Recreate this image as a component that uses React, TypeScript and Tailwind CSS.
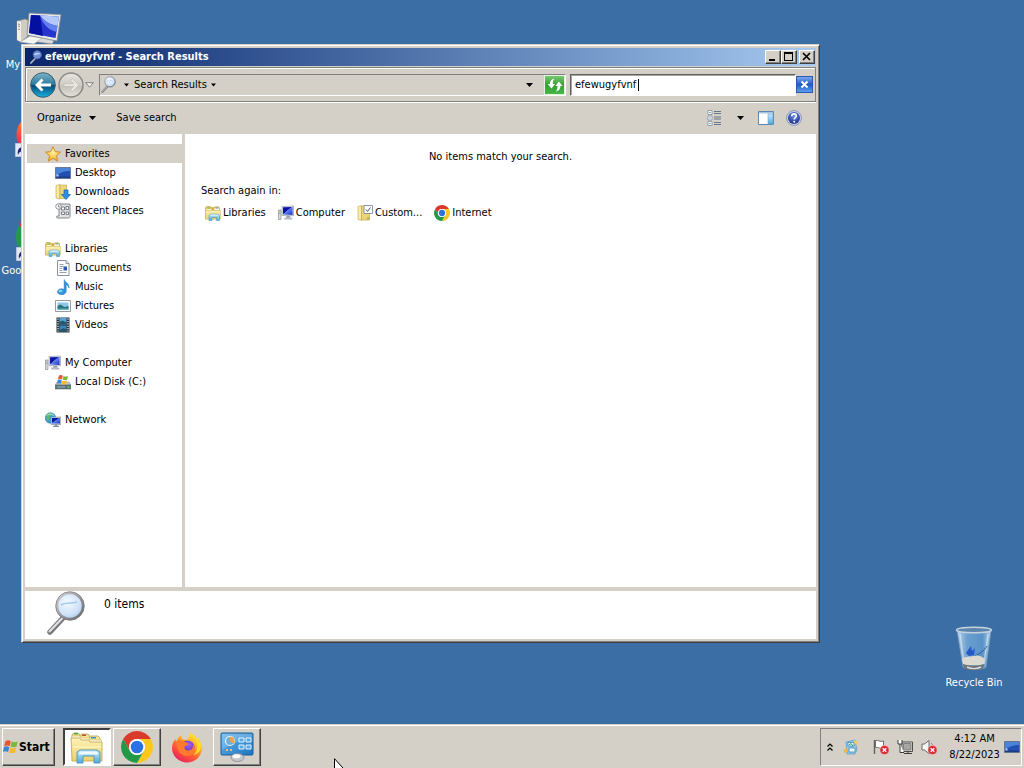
import { useState } from 'react'
import type { ReactNode, SVGProps } from 'react'
import { clsx } from 'clsx'

type IconProps = SVGProps<SVGSVGElement>

const RAISED =
  'border border-t-white border-l-white border-r-[#404040] border-b-[#404040] bg-[#d4d0c8] shadow-[inset_-1px_-1px_0_#808080]'

// Gradients shared by the icons below
function IconDefs() {
  return (
    <svg className="absolute h-0 w-0" aria-hidden="true">
      <defs>
        <linearGradient id="screen" x1="0" y1="0" x2="1" y2="1">
          <stop offset="0" stopColor="#0818b8" />
          <stop offset="0.42" stopColor="#0a10a0" />
          <stop offset="0.46" stopColor="#5f80f0" />
          <stop offset="1" stopColor="#2030c8" />
        </linearGradient>
        <linearGradient id="folder" x1="0" y1="0" x2="0" y2="1">
          <stop offset="0" stopColor="#fdf3b8" />
          <stop offset="1" stopColor="#ecd168" />
        </linearGradient>
        <linearGradient id="stand" x1="0" y1="0" x2="0" y2="1">
          <stop offset="0" stopColor="#c9ecfb" />
          <stop offset="1" stopColor="#4fa9dc" />
        </linearGradient>
        <radialGradient id="lens" cx="0.4" cy="0.35" r="0.8">
          <stop offset="0" stopColor="#f4faff" />
          <stop offset="0.6" stopColor="#cfe2f8" />
          <stop offset="1" stopColor="#9dbce4" />
        </radialGradient>
        <linearGradient id="metal" x1="0" y1="0" x2="1" y2="1">
          <stop offset="0" stopColor="#d4d4d8" />
          <stop offset="0.5" stopColor="#9a9aa0" />
          <stop offset="1" stopColor="#66666c" />
        </linearGradient>
        <linearGradient id="backBall" x1="0" y1="0" x2="0" y2="1">
          <stop offset="0" stopColor="#7fb4c8" />
          <stop offset="0.48" stopColor="#2b7a9c" />
          <stop offset="0.52" stopColor="#064a78" />
          <stop offset="1" stopColor="#19b4e4" />
        </linearGradient>
        <linearGradient id="forwardBall" x1="0" y1="0" x2="0" y2="1">
          <stop offset="0" stopColor="#e6e4df" />
          <stop offset="0.5" stopColor="#cfccc5" />
          <stop offset="0.55" stopColor="#c4c1ba" />
          <stop offset="1" stopColor="#e4e2dc" />
        </linearGradient>
        <radialGradient id="star" cx="0.5" cy="0.4" r="0.6">
          <stop offset="0" stopColor="#fff6a0" />
          <stop offset="1" stopColor="#f6a81c" />
        </radialGradient>
        <linearGradient id="fox" x1="0.85" y1="0.05" x2="0.25" y2="1">
          <stop offset="0" stopColor="#fff04a" />
          <stop offset="0.35" stopColor="#ffae1f" />
          <stop offset="0.65" stopColor="#ff5a33" />
          <stop offset="1" stopColor="#e81c64" />
        </linearGradient>
        <radialGradient id="foxGlobe" cx="0.6" cy="0.3" r="0.8">
          <stop offset="0" stopColor="#a45cf0" />
          <stop offset="1" stopColor="#452aa0" />
        </radialGradient>
        <linearGradient id="bin" x1="0" y1="0" x2="1" y2="0">
          <stop offset="0" stopColor="#b9d6ee" />
          <stop offset="0.3" stopColor="#6b9fd0" />
          <stop offset="0.75" stopColor="#5a92c8" />
          <stop offset="1" stopColor="#b4d4ec" />
        </linearGradient>
        <linearGradient id="panel" x1="0" y1="0" x2="1" y2="1">
          <stop offset="0" stopColor="#6cb8ec" />
          <stop offset="1" stopColor="#1c74c0" />
        </linearGradient>
        <radialGradient id="help" cx="0.5" cy="0.3" r="0.7">
          <stop offset="0" stopColor="#6f90e4" />
          <stop offset="1" stopColor="#1c2f92" />
        </radialGradient>
      </defs>
    </svg>
  )
}

function Icon({ children, ...rest }: IconProps) {
  return (
    <svg viewBox="0 0 16 16" width="16" height="16" aria-hidden="true" {...rest} className={clsx('shrink-0', rest.className)}>
      {children}
    </svg>
  )
}

function ComputerIcon(props: IconProps) {
  return (
    <Icon {...props}>
      <path d="M0.500 5h2.500v9.500h-2.500z" fill="#d8dadf" stroke="#8b8f98" strokeWidth="0.7" />
      <path d="M1.200 7h1.200M1.200 8.500h1.200" stroke="#5c8a4c" strokeWidth="0.6" />
      <path d="M4 1.500L15.500 1v9.800L4 10.500z" fill="#dfe3ea" stroke="#8a90a0" strokeWidth="0.6" />
      <path d="M5 2.300L14.600 2v7.900L5 9.600z" fill="url(#screen)" />
      <path d="M8.500 10.700h3.500l0.500 2h-4.500z" fill="#9aa0ac" />
      <path d="M6.500 13h7.500v1.200h-7.500z" fill="#c8ccd4" stroke="#8a90a0" strokeWidth="0.4" />
    </Icon>
  )
}

function DesktopComputerIcon(props: IconProps) {
  return (
    <Icon viewBox="0 0 46 40" width="46" height="40" {...props}>
      <path d="M1 10l8-2 3 1v16l-7 6-4-2z" fill="#cfccc4" stroke="#87857e" strokeWidth="0.7" />
      <path d="M1 10l4 1v20l-4-2z" fill="#f1efe8" />
      <path d="M2 13l2 0.500M2 15l2 0.500M2 18l2 0.500" stroke="#77756e" strokeWidth="0.8" />
      <path d="M14 24l18 2 6 4-2 3-22-3z" fill="#d9dadb" stroke="#85878c" strokeWidth="0.6" />
      <path d="M4 31l10-6 12 2-8 6z" fill="#f4f4f2" stroke="#aaa" strokeWidth="0.6" />
      <path d="M13 2L45 3.500 41 30 11 24z" fill="#e6e8ea" stroke="#83878f" strokeWidth="0.8" />
      <path d="M15 4L43 5.500 39.500 27 13 22z" fill="#2434cc" />
      <path d="M15 4l9 0.500 3 20.500L13 22z" fill="#0610a0" />
      <path d="M24 4.500L43 5.500 41.500 15C35 14 29 11 24 4.500z" fill="#b4c8fc" />
      <path d="M24 4.500C29 11 35 14 41.500 15l-1 6C33 19 27 14 24 4.500z" fill="#6480f0" />
    </Icon>
  )
}

function LibrariesIcon(props: IconProps) {
  return (
    <Icon viewBox="0 0 32 32" {...props}>
      <path d="M1 5l2-2h8l2 2h5l2-1.500h7l2 2V28H1z" fill="#e6c95e" stroke="#b3953a" strokeWidth="1" />
      <path d="M3 8h9l1 2h6V6h9v5H3z" fill="#fbf8dd" />
      <path d="M5 5h5v2H5z" fill="#6cbf50" />
      <path d="M13 7h5v2h-5z" fill="#e8804e" />
      <path d="M21 5h6v2h-6z" fill="#5aa4dc" />
      <path d="M1 11h30v17H1z" fill="url(#folder)" stroke="#c9ab4c" strokeWidth="0.8" />
      <path d="M8 21l3-3h15l3 3v10h-6v-6h-9v6H8z" fill="url(#stand)" stroke="#3c8fc4" strokeWidth="1" />
      <path d="M10 21l2-1.500h13l2 1.500z" fill="#eefaff" />
    </Icon>
  )
}

function ExplorerIcon(props: IconProps) {
  return (
    <Icon viewBox="0 0 34 34" width="34" height="34" {...props}>
      <path d="M2 5l1.500-2H8l2 2v4H2z" fill="#f2e08a" stroke="#ae9640" strokeWidth="0.7" />
      <path d="M10 6l1.500-2H18l2 2v4H10z" fill="#f4e596" stroke="#ae9640" strokeWidth="0.7" />
      <path d="M19 8l1.500-2H28l2 2v4H19z" fill="#f4e596" stroke="#ae9640" strokeWidth="0.7" />
      <path d="M4 3h4v1.500H4z" fill="#48a848" />
      <path d="M12 4.500h4V6h-4z" fill="#c04a38" />
      <path d="M21 7h5v1.500h-5z" fill="#3c8cd0" />
      <path d="M2 6h8l1 2h8l1 2h11.500v3H2z" fill="#fffbe4" stroke="#c5ad58" strokeWidth="0.5" />
      <path d="M1 8h9l1 2h8l1 2h12v19H2z" fill="url(#folder)" stroke="#bfa44a" strokeWidth="0.8" />
      <path d="M3 17h28" stroke="#fff9d0" strokeWidth="1" />
      <path d="M7 22l3-2h17l3 2v11h-6v-7H13v7H7z" fill="url(#stand)" stroke="#4a94c4" strokeWidth="0.9" />
      <path d="M9 23l2-1.500h15l2 1.500v1.500H9z" fill="#eefaff" />
    </Icon>
  )
}

function ChromeIcon(props: IconProps) {
  return (
    <Icon viewBox="0 0 24 24" {...props}>
      <path d="M1.610 6A12 12 0 0 1 22.390 6H12A6 6 0 0 0 6.800 15z" fill="#d93a2c" />
      <path d="M22.390 6A12 12 0 0 1 12 24l5.200-9A6 6 0 0 0 12 6z" fill="#fbc71c" />
      <path d="M12 24A12 12 0 0 1 1.610 6l5.190 9a6 6 0 0 0 10.400 0z" fill="#249a48" />
      <circle cx="12" cy="12" r="6" fill="#fff" />
      <circle cx="12" cy="12" r="4.700" fill="#2c70e4" />
    </Icon>
  )
}

function FirefoxIcon(props: IconProps) {
  return (
    <Icon viewBox="0 0 32 32" {...props}>
      <path
        d="M20 1c1.500 2.500 3.500 3.500 5.500 6.500 1-0.500 1-1.500 1-2 3 4 4.500 8 4.300 12.500C30.400 26 24 31.500 16 31.500S1 25 1 17.500c0-4 1.500-7.500 3.500-9.500 0 1.500 0.500 2 1 2.500C6.500 7 8.500 5 10.500 4c-0.500 2 0 3.500 1.500 4.500 2 0 3.500 0 5 0.500C17.500 6 18 3 20 1z"
        fill="url(#fox)"
      />
      <circle cx="16.500" cy="16.500" r="7" fill="url(#foxGlobe)" />
      <path d="M6 10.500c3-2 6-1.500 8.500 1 1.500 0 2.500 0.500 3 1.500-1 1.500-3 1.500-4 2.500-0.500 2 1 4.500 4.500 4 3-0.500 4.500-3 4-6 2 2 2.500 5.500 0.500 8.500-3 4-10 4-13.500 0C6.500 19 5 14 6 10.500z" fill="#ff7a2c" />
      <path d="M20 1c0 4 5 6 6 12 1 5-1 9-4 11 6-1 8.500-6 8-10-1-3-3-4-4.500-6.500C23.500 4.500 21.500 3.500 20 1z" fill="#ffd83c" />
    </Icon>
  )
}

function ControlPanelIcon(props: IconProps) {
  return (
    <Icon viewBox="0 0 34 30" width="34" height="30" {...props}>
      <rect x="1" y="1" width="32" height="22" rx="1" fill="url(#panel)" stroke="#1d5f9c" />
      <path d="M2 2h30v4C20 8 10 12 2 18z" fill="#fff" opacity="0.18" />
      <circle cx="10" cy="9" r="4.500" fill="#66b0e8" stroke="#e6f4ff" strokeWidth="1.200" />
      <path d="M10 9V4.500A4.500 4.500 0 0 1 13.500 12z" fill="#f0a43c" />
      <path d="M19 6h5v4h-5zM26 6h5v4h-5zM19 13h5v4h-5zM26 13h5v4h-5z" fill="#58a8e4" stroke="#e6f4ff" strokeWidth="1" />
      <path d="M6 18h2M10 18h2" stroke="#f0c060" strokeWidth="2" />
      <ellipse cx="17.500" cy="25.500" rx="6.500" ry="4" fill="#c4c6ca" stroke="#888c94" strokeWidth="0.8" />
      <ellipse cx="16.500" cy="24.300" rx="4" ry="2" fill="#fafafa" />
    </Icon>
  )
}

function SearchGlass({ dark, ...props }: IconProps & { dark?: boolean }) {
  return (
    <Icon viewBox="0 0 40 44" {...props}>
      <path d="M17 27L4 41" stroke={dark ? '#8a90b0' : '#77777d'} strokeWidth="5.500" strokeLinecap="round" />
      <path d="M17 26.500L3.500 40.500" stroke="#e4e4e6" strokeWidth="2" strokeLinecap="round" />
      <circle cx="24" cy="15" r="13" fill={dark ? '#7090d8' : 'url(#lens)'} stroke={dark ? '#5468a8' : 'url(#metal)'} strokeWidth="2.500" />
      {!dark && <circle cx="24" cy="15" r="14.300" fill="none" stroke="#707078" strokeWidth="0.7" />}
      <path d="M15 14c5-3 10-1 16-3" stroke={dark ? '#d8e4fc' : '#a4caf0'} strokeWidth={dark ? 4 : 1.5} fill="none" />
    </Icon>
  )
}

function StarIcon() {
  return (
    <Icon>
      <path d="M8 0.700l2.200 4.900 5.300 0.500-4 3.600 1.200 5.400L8 12.300l-4.700 2.800 1.200-5.400-4-3.600 5.300-0.500z" fill="url(#star)" stroke="#c8801c" strokeWidth="0.8" strokeLinejoin="round" />
    </Icon>
  )
}

function DesktopIcon(props: IconProps) {
  return (
    <Icon {...props}>
      <path d="M0.500 2.500h15v11h-15z" fill="#2450b4" stroke="#5f6c88" strokeWidth="0.8" />
      <path d="M1 3h14v3C9 6 4 8 1 11z" fill="#4c84d8" />
      <path d="M1 11.500h14V13H1z" fill="#1c3c84" />
      <path d="M1.500 9.500h2v2h-2z" fill="#bcd4f4" />
    </Icon>
  )
}

function DownloadsIcon() {
  return (
    <Icon>
      <path d="M1 1.500l4-1v14.500l-4-1z" fill="#f6e9a0" stroke="#bfa24a" strokeWidth="0.6" />
      <path d="M5 1h6.500v13.500H5z" fill="#eed678" stroke="#bfa24a" strokeWidth="0.6" />
      <path d="M9 6h4v4.500h2.500L11 15.500 6.500 10.500H9z" fill="#2f8fe0" stroke="#1560a8" strokeWidth="0.7" />
    </Icon>
  )
}

function RecentIcon() {
  return (
    <Icon>
      <path d="M4 1h11v12.500c0 1-1 1.500-2 1.500H2.500c-1 0-1.500-2 0-2H4z" fill="#dfe2e5" stroke="#777b80" strokeWidth="0.9" />
      <path d="M6.500 4h3v3h-3zM11 3.500h2.500v3H11zM6.500 9h3v2.500h-3zM11 9h2.500v2.500H11z" fill="#fff" stroke="#70747a" strokeWidth="0.9" />
      <circle cx="3.500" cy="3.500" r="2.800" fill="#f8f8f8" stroke="#777b80" strokeWidth="0.8" />
      <path d="M3.500 1.800v2h1.500" stroke="#666" strokeWidth="0.7" fill="none" />
    </Icon>
  )
}

function DocumentIcon() {
  return (
    <Icon>
      <path d="M2.500 0.500h8.500l3 3v12h-11.500z" fill="#fdfdfd" stroke="#80868e" strokeWidth="0.9" />
      <path d="M11 0.500v3h3" fill="#dde2e8" stroke="#80868e" strokeWidth="0.8" />
      <path d="M4.500 4.500h4M4.500 6.500h4M4.500 8.500h2.500M4.500 10.500h2.500M4.500 12.500h7" stroke="#8a96a8" strokeWidth="0.9" />
      <path d="M8.500 6.500h3.500v4h-3.500z" fill="#2c58b4" />
    </Icon>
  )
}

function MusicIcon() {
  return (
    <Icon>
      <path d="M9.200 0.500c0.500 3 5.300 3.500 4.800 8.500-0.500-2-1.500-3-2.800-3.200v6.200c0 5-9.200 4.500-8.700 0.500 0.500-2.500 4-3.500 6.700-2z" fill="#2f96dc" stroke="#1b6cb0" strokeWidth="0.5" />
      <ellipse cx="5.500" cy="12" rx="2" ry="1.200" fill="#90d0f8" />
    </Icon>
  )
}

function PicturesIcon() {
  return (
    <Icon>
      <path d="M0.500 2.500h15v11h-15z" fill="#fdfdfd" stroke="#8a9098" strokeWidth="0.9" />
      <path d="M2.500 4.500h11v7h-11z" fill="#8cc8ec" />
      <path d="M2.500 8l3-1.500 4 2.500 4-1v3.500h-11z" fill="#2e7474" />
      <path d="M2.500 10.500h11v1h-11z" fill="#5fb4d4" />
    </Icon>
  )
}

function VideosIcon() {
  return (
    <Icon>
      <path d="M1.500 0.500h13v15h-13z" fill="#28343c" />
      <path d="M4.500 1h7v6.500h-7z" fill="#5aa4d8" />
      <path d="M4.500 8.500h7V15h-7z" fill="#3c84bc" />
      <path d="M4.500 5l3-1.500 4 2v2h-7zM4.500 13l4-2 3 1.500V15h-7z" fill="#2a5468" />
      <path d="M3 1.500v13M13 1.500v13" stroke="#e8eef0" strokeWidth="1.200" strokeDasharray="1.200 1.200" />
    </Icon>
  )
}

function FlagLogo(props: IconProps) {
  return (
    <Icon {...props}>
      <path d="M2.500 2.200C4.500 1 6 1.200 7.800 2.200L6.500 7.200C5 6.200 3 6.200 1.200 7.200z" fill="#e8562c" />
      <path d="M8.600 2.600c2 1 4 1 6.200 0l-1.300 5c-2 1-4 0.800-6 0z" fill="#7cb83c" />
      <path d="M1 8c2-1 3.800-0.800 5.300 0.200L5 13c-1.600-1-3.500-0.900-5 0z" fill="#3c84d8" />
      <path d="M7.200 8.500c2 1 4 1 6 0L12 13.400c-2 1-4 0.800-6 0z" fill="#f4bc2c" />
    </Icon>
  )
}

function DiskIcon() {
  return (
    <Icon>
      <path d="M2 8h12l1.800 3H0.200z" fill="#c4cad0" stroke="#788088" strokeWidth="0.5" />
      <path d="M0.200 11h15.600v4H0.200z" fill="#5c7478" stroke="#48585c" strokeWidth="0.5" />
      <path d="M2 13h8" stroke="#9cb4b8" strokeWidth="1" />
      <path d="M12.500 12.500h1.800v1.200h-1.800z" fill="#5cf060" />
      <FlagLogo x="2" y="0" width="12" height="12" />
    </Icon>
  )
}

function NetworkIcon() {
  return (
    <Icon>
      <circle cx="5.500" cy="6" r="5.300" fill="#3c9cd8" stroke="#226c9c" strokeWidth="0.5" />
      <path d="M2 3c2-2 5-2.500 6-1.500L6 4 4.500 4.500 5 7 2.500 8.500 1 6z" fill="#5cbc6c" />
      <path d="M1.500 3.500C4 1.500 8 2 10 4.500" stroke="#d8f0fc" strokeWidth="0.7" fill="none" />
      <path d="M6 5h10v7.500H6z" fill="#c8d0dc" stroke="#687080" strokeWidth="0.5" />
      <path d="M7 6h8v5.500H7z" fill="url(#screen)" />
      <path d="M9.500 12.500h3v1.500h1.500v1H8v-1h1.500z" fill="#8890a0" />
    </Icon>
  )
}

function SearchCustomIcon() {
  return (
    <Icon>
      <path d="M1 1.500l3.500-1v15l-3.500-1z" fill="#f8eda8" stroke="#bfa24a" strokeWidth="0.6" />
      <path d="M4.500 1h8v14h-8z" fill="#eed678" stroke="#bfa24a" strokeWidth="0.6" />
      <path d="M7 0.500h8.500v8H7z" fill="#fff" stroke="#6c7c94" strokeWidth="0.8" />
      <path d="M9 4.500l1.500 2 3-4" stroke="#3c5c8c" strokeWidth="1" fill="none" />
      <path d="M10 12h3v3h-3z" fill="#c4b468" />
    </Icon>
  )
}

function Arrow({ className }: { className?: string }) {
  return (
    <svg viewBox="0 0 7 4" width="7" height="4" className={clsx('shrink-0', className)} aria-hidden="true">
      <path d="M0 0h7L3.500 4z" fill="currentColor" />
    </svg>
  )
}

function RecycleBinIcon() {
  return (
    <svg viewBox="0 0 38 46" width="38" height="46" aria-hidden="true">
      <path d="M2 4h34l-5 37c-1 3-21 3-23 0z" fill="url(#bin)" stroke="#7c98b4" strokeWidth="0.8" />
      <path d="M5 8l4 30M33 8l-4 30" stroke="#dcecf8" strokeWidth="1.500" opacity="0.6" />
      <path d="M13 24l3-4 1 5 3-3-1 7-5 1-3-3z" fill="#2458c8" />
      <path d="M32 20c-3 5-8 9-16 11" stroke="#2c5c94" strokeWidth="1" fill="none" />
      <path d="M7 33c3-3 8-2 11-3s8-1 12 3l-1 5c-6 2-15 2-21 0z" fill="#dcdad0" />
      <path d="M8 38c6 2 16 2 21 0l-1 4c-4 3-15 3-19 0z" fill="#6e7478" />
      <path d="M12 41c4 2 10 2 14 0" stroke="#d8dcdf" strokeWidth="1.500" fill="none" />
      <ellipse cx="19" cy="4" rx="17.500" ry="2.800" fill="#5c84ac" stroke="#c4d2de" strokeWidth="1.500" />
    </svg>
  )
}

function ShortcutBadge() {
  return (
    <svg viewBox="0 0 14 14" width="14" height="14" className="absolute bottom-0 left-0" aria-hidden="true">
      <path d="M0.500 0.500h13v13h-13z" fill="#e4eaf4" stroke="#b4c4dc" />
      <path d="M3 12C2 7 4 4 8 4V2L12 6.500 8 10V8C6 8 4 9 3 12z" fill="#1c2c6c" />
    </svg>
  )
}

function DesktopItem({ label, children, className }: { label: string; children: ReactNode; className: string }) {
  return (
    <button className={clsx('absolute flex w-20 flex-col items-center gap-0.5 text-white', className)}>
      <span className="relative flex h-12 items-center">{children}</span>
      <span className="whitespace-nowrap">{label}</span>
    </button>
  )
}

const NAV = [
  {
    label: 'Favorites',
    icon: <StarIcon />,
    selected: true,
    items: [
      { label: 'Desktop', icon: <DesktopIcon /> },
      { label: 'Downloads', icon: <DownloadsIcon /> },
      { label: 'Recent Places', icon: <RecentIcon /> },
    ],
  },
  {
    label: 'Libraries',
    icon: <LibrariesIcon />,
    items: [
      { label: 'Documents', icon: <DocumentIcon /> },
      { label: 'Music', icon: <MusicIcon /> },
      { label: 'Pictures', icon: <PicturesIcon /> },
      { label: 'Videos', icon: <VideosIcon /> },
    ],
  },
  {
    label: 'My Computer',
    icon: <ComputerIcon />,
    items: [{ label: 'Local Disk (C:)', icon: <DiskIcon /> }],
  },
  { label: 'Network', icon: <NetworkIcon />, items: [] },
]

const SEARCH_AGAIN = [
  { label: 'Libraries', icon: <LibrariesIcon /> },
  { label: 'Computer', icon: <ComputerIcon /> },
  { label: 'Custom...', icon: <SearchCustomIcon /> },
  { label: 'Internet', icon: <ChromeIcon /> },
]

function TitleBar({ query }: { query: string }) {
  return (
    <div className="flex h-[18px] items-center bg-linear-to-r from-[#0a246a] to-[#a6caf0] pl-1 text-white">
      <SearchGlass dark width="14" height="14" />
      <h1 className="ml-0.5 flex-1 truncate text-[11px] font-bold">{query} - Search Results</h1>
      <button aria-label="Minimize" className={clsx('h-3.5 w-4', RAISED)}>
        <svg viewBox="0 0 14 12" className="h-full w-full" aria-hidden="true">
          <path d="M3 8h6v2H3z" />
        </svg>
      </button>
      <button aria-label="Maximize" className={clsx('h-3.5 w-4', RAISED)}>
        <svg viewBox="0 0 14 12" className="h-full w-full" aria-hidden="true">
          <path d="M2 1h9v9H2zM3 3v6h7V3z" fillRule="evenodd" />
        </svg>
      </button>
      <button aria-label="Close" className={clsx('mr-px ml-0.5 h-3.5 w-4', RAISED)}>
        <svg viewBox="0 0 14 12" className="h-full w-full" aria-hidden="true">
          <path d="M3 2l7 7M10 2L3 9" stroke="#000" strokeWidth="1.700" />
        </svg>
      </button>
    </div>
  )
}

function AddressBar({ query, onChange }: { query: string; onChange: (value: string) => void }) {
  return (
    <div className="mt-px flex h-[35px] items-center border border-[#808080] pr-0.5 pl-1 shadow-[inset_1px_1px_0_#fff,0_1px_0_#fff]">
      <button aria-label="Back">
        <svg viewBox="0 0 26 26" width="26" height="26" aria-hidden="true">
          <circle cx="13" cy="13" r="12.300" fill="url(#backBall)" stroke="#3c5c6c" />
          <path d="M5 13l6.500-6.500 2 2L10.500 11.500H21v3H10.500l3 3-2 2z" fill="#fff" />
        </svg>
      </button>
      <button aria-label="Forward" className="ml-0.5">
        <svg viewBox="0 0 26 26" width="26" height="26" aria-hidden="true">
          <circle cx="13" cy="13" r="12" fill="url(#forwardBall)" stroke="#8c8a84" strokeWidth="1.500" />
          <path d="M21 13l-6.500-6.500-2 2 3 3H6v3h9.500l-3 3 2 2z" fill="#e6e4de" stroke="#bab7b0" strokeWidth="0.600" />
        </svg>
      </button>
      <button aria-label="Recent pages" className="mx-px">
        <svg viewBox="0 0 9 6" width="9" height="6" aria-hidden="true">
          <path d="M0.700 0.700h7.600L4.500 5.200z" fill="#f4f2ee" stroke="#6c6a66" strokeWidth="0.800" />
        </svg>
      </button>
      <div className="ml-1 flex h-[22px] flex-1 items-center border border-t-[#808080] border-r-white border-b-white border-l-[#808080]">
        <SearchGlass width="17" height="17" />
        <button aria-label="Locations" className="pr-[5px] pl-[7px]">
          <Arrow className="w-[5px]" />
        </button>
        <button className="flex items-center gap-1">
          Search Results
          <Arrow className="w-[5px]" />
        </button>
        <button aria-label="Previous locations" className="mr-[11px] ml-auto">
          <Arrow />
        </button>
        <button aria-label="Refresh" className="flex h-5 w-[21px] items-center justify-center border border-[#e4f4e0] bg-linear-to-b from-[#78c870] via-[#30a030] to-[#48b848]">
          <svg viewBox="0 0 18 16" width="18" height="16" aria-hidden="true">
            <path d="M8.500 1.500C5.500 2 4 4 3.800 7H1.500L5.500 11.500 9 7H6.800C6.800 5 7.200 3 8.500 1.500z" fill="#fff" />
            <path d="M10 14.500c3-0.500 4.300-2.500 4.500-5.500h2.200L12.800 4.500 9.300 9h2.200c0 2-0.300 4-1.500 5.500z" fill="#fff" />
          </svg>
        </button>
      </div>
      <div className="relative ml-1 flex h-[22px] w-[226px] border border-t-[#606060] border-r-white border-b-white border-l-[#606060] bg-white shadow-[inset_1px_1px_0_#a8a6a0]">
        <input
          aria-label="Search"
          value={query}
          onChange={(e) => onChange(e.target.value)}
          className="w-full bg-transparent pl-1 outline-none"
        />
        <span className="absolute top-1 left-[67px] h-3 w-px bg-black" />
      </div>
      <button aria-label="Clear search" className="flex h-[17px] w-[17px] items-center justify-center border border-[#2c58b0] bg-linear-to-b from-[#7ca8ec] via-[#2458c4] to-[#5ca0f0]">
        <svg viewBox="0 0 9 9" width="9" height="9" aria-hidden="true">
          <path d="M1.500 1.500l6 6M7.500 1.500l-6 6" stroke="#fff" strokeWidth="2" />
        </svg>
      </button>
    </div>
  )
}

function Toolbar() {
  return (
    <div className="flex h-8 items-center pr-3.5 pl-3">
      <button className="flex items-center gap-2">
        Organize
        <Arrow />
      </button>
      <button className="ml-5">Save search</button>
      <div className="ml-auto flex items-center">
        <button aria-label="Change view">
          <Icon>
            <path d="M1 0.500h4v4H1zM1 6h4v4H1zM1 11.500h4v4H1z" fill="#fff" stroke="#7890a4" strokeWidth="0.800" />
            <path d="M2.500 2h1v1h-1zM2.500 7.500h1v1h-1zM2.500 13h1v1h-1z" fill="#2c4c70" />
            <path d="M7 1.500h7M7 3.500h7M7 7h7M7 9h7M7 12.500h7M7 14.500h7" stroke="#587088" strokeWidth="0.900" />
          </Icon>
        </button>
        <button aria-label="More options" className="px-3.5">
          <Arrow />
        </button>
        <button aria-label="Show the preview pane">
          <Icon>
            <path d="M0.500 1.500h15v13h-15z" fill="#fff" stroke="#5c88b0" />
            <path d="M1 2h14v1.500H1z" fill="#a8c4dc" />
            <path d="M10 4h5v10h-5z" fill="url(#stand)" stroke="#6ca0c8" strokeWidth="0.600" />
          </Icon>
        </button>
        <button aria-label="Get help" className="ml-3">
          <Icon>
            <circle cx="8" cy="8" r="7.500" fill="#c8d0e4" stroke="#7884a8" strokeWidth="0.700" />
            <circle cx="8" cy="8" r="6" fill="url(#help)" />
            <path d="M5.700 6.200C5.800 3 10.500 3.200 10.300 6 10.200 7.700 8.200 7.700 8.200 9.600" stroke="#fff" strokeWidth="1.600" fill="none" />
            <circle cx="8.200" cy="11.800" r="1" fill="#fff" />
          </Icon>
        </button>
      </div>
    </div>
  )
}

function Sidebar() {
  return (
    <nav className="w-[157px] shrink-0 overflow-hidden bg-white pt-2.5">
      {NAV.map((group) => (
        <div key={group.label} className="mb-[19px]">
          <button
            className={clsx(
              'ml-0.5 flex h-[19px] w-full items-center gap-1 pl-[18px]',
              group.selected && 'bg-[#d4d0c8]'
            )}
          >
            {group.icon}
            {group.label}
          </button>
          {group.items.map((item) => (
            <button key={item.label} className="flex h-[19px] w-full items-center gap-1 pl-[30px]">
              {item.icon}
              {item.label}
            </button>
          ))}
        </div>
      ))}
    </nav>
  )
}

function Results() {
  return (
    <main className="flex-1 bg-white px-4 pt-[15px]">
      <p className="text-center leading-4">No items match your search.</p>
      <p className="mt-[18px] leading-4">Search again in:</p>
      <div className="mt-1.5 flex gap-3 pl-1">
        {SEARCH_AGAIN.map((place) => (
          <button key={place.label} className="flex items-center gap-0.5 leading-4">
            {place.icon}
            {place.label}
          </button>
        ))}
      </div>
    </main>
  )
}

function ErrorBadge() {
  return (
    <>
      <circle cx="11.500" cy="11" r="4.600" fill="#d42c34" stroke="#f4d0d0" strokeWidth="0.600" />
      <path d="M9.700 9.200l3.600 3.600M13.300 9.200l-3.600 3.600" stroke="#fff" strokeWidth="1.300" />
    </>
  )
}

function Tray() {
  return (
    <div className="mr-0.5 flex h-[38px] items-center border border-t-[#808080] border-r-white border-b-white border-l-[#808080] pr-px pl-1.5">
      <button aria-label="Show hidden icons" className="mr-2.5">
        <svg viewBox="0 0 6 8" width="6" height="8" aria-hidden="true">
          <path d="M0.500 3.500L3 1l2.500 2.500M0.500 7.500L3 5l2.500 2.500" stroke="#000" strokeWidth="1.200" fill="none" />
        </svg>
      </button>
      <Icon>
        <path d="M3 3l9-2 2 10-2 4H4z" fill="#8cc8ec" stroke="#5c98bc" strokeWidth="0.700" />
        <path d="M5 3.500h6V7H5zM6 9h6v4H6z" fill="#e8f6fc" stroke="#3c84b0" strokeWidth="0.700" />
        <path d="M11 1l4 2-1 3-3-2z" fill="#f4c85c" />
        <path d="M6 6l2-1.500L10 7" stroke="#2c9c5c" strokeWidth="1" fill="none" />
        <path d="M0.500 10.500L4 9v4l-3 1z" fill="#e8b84c" />
      </Icon>
      <div className="ml-3.5 flex gap-2">
        <Icon>
          <path d="M1.500 1v14" stroke="#606060" strokeWidth="1.400" />
          <path d="M2.500 1.500c3-1 4 2 8 0.500v7c-4 1.500-5-1.500-8-0.500z" fill="#fff" stroke="#606060" strokeWidth="0.900" />
          <ErrorBadge />
        </Icon>
        <Icon>
          <path d="M5 3h10.500v9.500H5z" fill="#e8e6e0" stroke="#3c3c3c" strokeWidth="0.900" />
          <path d="M6.500 4.500h7.500v6.500H6.500z" fill="#a8a6a0" stroke="#707070" strokeWidth="0.800" />
          <path d="M7 14.500h8M11 12v2.500" stroke="#3c3c3c" strokeWidth="1" />
          <path d="M1 1v4h4V1M3 5v8.500h4" fill="#fff" stroke="#3c3c3c" strokeWidth="1" />
        </Icon>
        <Icon>
          <path d="M1 5h2.500L8 1.500v13L3.500 11H1z" fill="#f4f4f4" stroke="#606060" strokeWidth="0.900" />
          <path d="M10 4c1.500 1 2 2.500 2 4" stroke="#808080" strokeWidth="0.900" fill="none" />
          <ErrorBadge />
        </Icon>
      </div>
      <time className="ml-2.5 w-[55px] text-center leading-4 whitespace-nowrap">
        4:12 AM
        <br />
        8/22/2023
      </time>
      <button aria-label="Show desktop" className="ml-0.5">
        <DesktopIcon />
      </button>
    </div>
  )
}

function Taskbar() {
  return (
    <footer className="flex h-11 shrink-0 items-center justify-between bg-[#d4d0c8] pt-1 pb-0.5 pl-0.5 shadow-[inset_0_1px_0_#d4d0c8,inset_0_2px_0_#fff]">
      <div className="flex items-center">
        <button className={clsx('flex h-[38px] w-[53px] items-center text-xs font-bold', RAISED)}>
          <FlagLogo />
          Start
        </button>
        <div className="ml-2 flex gap-0.5">
          <button
            aria-label="Windows Explorer"
            className="flex h-[38px] w-12 items-center justify-center border-2 border-t-[#404040] border-r-white border-b-white border-l-[#404040] bg-white"
          >
            <ExplorerIcon />
          </button>
          <button aria-label="Google Chrome" className={clsx('flex h-[38px] w-12 items-center justify-center', RAISED)}>
            <ChromeIcon width="32" height="32" />
          </button>
          <button aria-label="Firefox" className="flex h-[38px] w-12 items-center justify-center">
            <FirefoxIcon width="32" height="32" />
          </button>
          <button aria-label="Control Panel" className={clsx('flex h-[38px] w-12 items-center justify-center', RAISED)}>
            <ControlPanelIcon />
          </button>
        </div>
      </div>
      <Tray />
    </footer>
  )
}

export default function App() {
  const [query, setQuery] = useState('efewugyfvnf')

  return (
    <div className="relative flex h-screen flex-col overflow-hidden bg-[#3a6ea5] font-['DejaVu_Sans_Condensed','DejaVu_Sans',sans-serif] text-[11px] leading-4 text-black">
      <IconDefs />
      <div className="relative flex-1">
        <DesktopItem label="My Computer" className="top-[7px] -left-px">
          <DesktopComputerIcon />
        </DesktopItem>
        <DesktopItem label="Firefox" className="top-[109px] -left-0.5">
          <FirefoxIcon width="46" height="46" />
          <ShortcutBadge />
        </DesktopItem>
        <DesktopItem label="Google Chrome" className="top-[213px] left-0">
          <ChromeIcon width="48" height="48" />
          <ShortcutBadge />
        </DesktopItem>
        <DesktopItem label="Recycle Bin" className="right-2.5 bottom-[33px]">
          <RecycleBinIcon />
        </DesktopItem>

        {/* Explorer window */}
        <section className="absolute top-11 right-[204px] bottom-[81px] left-[21px] flex flex-col border border-t-[#d4d0c8] border-r-[#404040] border-b-[#404040] border-l-[#d4d0c8] bg-[#d4d0c8] p-[3px] shadow-[inset_1px_1px_0_#fff,inset_-1px_-1px_0_#808080]">
          <TitleBar query={query} />
          <AddressBar query={query} onChange={setQuery} />
          <Toolbar />
          <div className="flex flex-1 gap-[3px]">
            <Sidebar />
            <Results />
          </div>
          <div className="mt-1 flex h-12 bg-white pl-[21px]">
            <SearchGlass width="40" height="44" />
            <p className="ml-[18px] pt-[5px] text-xs">0 items</p>
          </div>
        </section>
      </div>
      <Taskbar />

      {/* Mouse pointer */}
      <svg viewBox="0 0 12 19" width="12" height="19" className="absolute top-[758px] left-[334px]" aria-hidden="true">
        <path d="M0.500 0.700v15l3.500-3.200 2.500 5.500 2-1-2.500-5h4.800z" fill="#fff" stroke="#000" />
      </svg>
    </div>
  )
}
